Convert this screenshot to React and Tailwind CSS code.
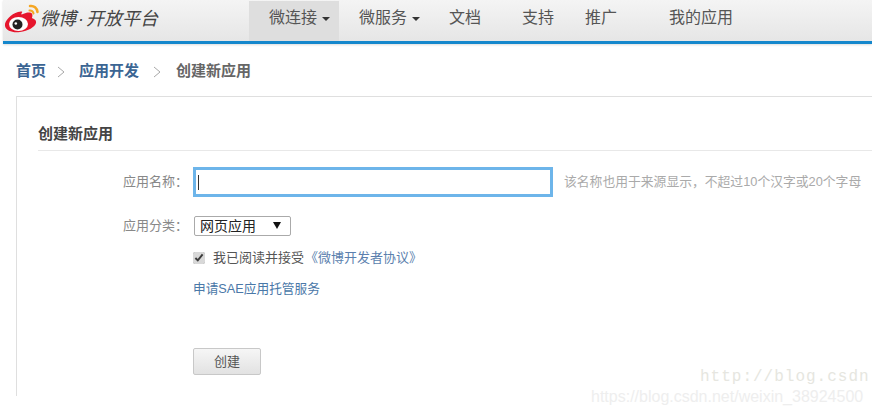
import React from 'react';

const cjk = { fontFamily: '"Liberation Sans", "Noto Sans CJK SC", sans-serif' };

const navItems = [
  { label: '微连接', caret: true, active: true, cls: 'w-[90px] pl-5' },
  { label: '微服务', caret: true, cls: 'w-[90px] pl-5' },
  { label: '文档', cls: 'w-[93px] pl-5' },
  { label: '支持', cls: 'w-[63px] pl-0' },
  { label: '推广', cls: 'w-[84px] pl-0' },
  { label: '我的应用', cls: 'w-[110px] pl-0' },
];

const WeiboLogo = () => (
  <svg width="37" height="30" viewBox="0 0 37 30" className="shrink-0">
    <path d="M15 8C8 10 1 17 2 22c1 5 8 7 15 6 8-1 15-5 16-9 .6-3-2-4-4-5 1-3 .4-5-2-5.400-2-.4-5 .4-7 1.400-2 1-2 0-1-1.600C20 7.500 18 7 15 8z" fill="#e6162d" />
    <ellipse cx="15.500" cy="20" rx="9.500" ry="7" fill="#fff" />
    <circle cx="14.500" cy="20.500" r="5" fill="#222" />
    <circle cx="12.800" cy="19.500" r="1.300" fill="#fff" />
    <path d="M27 2c4-.6 7 2 7.500 6" fill="none" stroke="#f5a623" strokeWidth="2.500" strokeLinecap="round" />
    <path d="M26.500 6.500c2-.3 3.700 1 4 3" fill="none" stroke="#f5a623" strokeWidth="2" strokeLinecap="round" />
  </svg>
);

const Chevron = () => (
  <svg width="8" height="12" viewBox="0 0 8 12" className="shrink-0">
    <path d="M1 1l6 5-6 5" fill="none" stroke="#a8a8a8" strokeWidth="1" />
  </svg>
);

const Header = () => (
  <div className="ml-[3px] flex h-[44px] border-b-[3px] border-[#1587cc] bg-gradient-to-b from-[#f4f4f4] to-[#e6e6e6] shadow-[0_1px_2px_#ddd]">
    <div className="flex w-[246px] items-center pb-[3px]">
      <WeiboLogo />
      <span className="text-[18px] italic text-[#444]">微博<span className="mx-[2px]">·</span>开放平台</span>
    </div>
    <div className="flex pt-[1px]">
      {navItems.map((item) => (
        <div key={item.label} className={`flex items-center pb-[7px] text-[16px] text-[#555] ${item.cls} ${item.active ? 'bg-[#dedede]' : ''}`}>
          {item.label}
          {item.caret && <span className="ml-[5px] mt-[2px] border-x-[4px] border-t-[4px] border-x-transparent border-t-[#333]" />}
        </div>
      ))}
    </div>
  </div>
);

const Breadcrumb = () => (
  <div className="flex h-[52px] items-center pl-4 pt-[3px] text-[15px] font-bold text-[#3b6593]">
    <span>首页</span>
    <span className="ml-[11px] mr-[14px]"><Chevron /></span>
    <span>应用开发</span>
    <span className="ml-[14px] mr-[15px]"><Chevron /></span>
    <span className="text-[#666]">创建新应用</span>
  </div>
);

const Form = () => (
  <div className="ml-4 h-[300px] border-l border-t border-[#dfdfdf] pl-[21px]">
    <div className="mt-[26px] h-[28px] border-b border-[#e8e8e8] text-[15px] leading-[22px] font-bold text-[#444]">创建新应用</div>
    <div className="mt-4 flex h-[30px] items-center">
      <label className="w-[155px] pl-[85px] whitespace-nowrap text-[13px] text-[#888]">应用名称：</label>
      <div className="flex h-[30px] w-[360px] shrink-0 items-center border-[3px] border-[#6db5ea] pl-[2px]">
        <span className="h-[15px] w-[1px] bg-[#333]" />
      </div>
      <span className="ml-[11px] whitespace-nowrap text-[12.800px] text-[#aaa]">该名称也用于来源显示，不超过10个汉字或20个字母</span>
    </div>
    <div className="mt-[18px] flex h-[22px] items-center">
      <label className="w-[156px] pl-[85px] whitespace-nowrap text-[13px] text-[#888]">应用分类：</label>
      <div className="relative">
        <select defaultValue="web" style={cjk} className="block h-[20px] w-[97px] appearance-none rounded-[2px] border border-[#aaa] bg-white pl-[5px] text-[14px] leading-[18px] text-[#222]">
          <option value="web">网页应用</option>
        </select>
        <span className="absolute right-[10px] top-[6px] border-x-[4px] border-t-[7px] border-x-transparent border-t-[#111]" />
      </div>
    </div>
    <div className="ml-[155px] mt-[13px] flex h-[16px] items-center text-[13px] text-[#555]">
      <input type="checkbox" defaultChecked readOnly className="m-0 h-3 w-3 accent-[#d8d8d8]" />
      <span className="ml-2">我已阅读并接受</span>
      <a className="ml-[1px] text-[#5b7fae]">《微博开发者协议》</a>
    </div>
    <a className="ml-[155px] mt-[14px] block h-[18px] text-[12.700px] leading-[18px] text-[#4a78a8]">申请SAE应用托管服务</a>
    <button className="ml-[155px] mt-[50px] block h-[27px] w-[68px] rounded-[2px] border border-[#c8c8c8] bg-gradient-to-b from-[#f6f6f6] to-[#e2e2e2] text-[13px] text-[#555]">创建</button>
  </div>
);

export default function App() {
  return (
    <div style={cjk} className="relative h-[414px] w-[872px] overflow-hidden bg-white">
      <Header />
      <Breadcrumb />
      <Form />
      {/* watermark */}
      <span className="absolute left-[700px] top-[365px] whitespace-nowrap text-[16px] tracking-[1px] text-[#e6e6e0] [font-family:'Liberation_Mono',monospace]">http://blog.csdn</span>
      <span className="absolute left-[591px] top-[385px] whitespace-nowrap text-[16px] text-[#eeeeee]">https://blog.csdn.net/weixin_38924500</span>
    </div>
  );
}
